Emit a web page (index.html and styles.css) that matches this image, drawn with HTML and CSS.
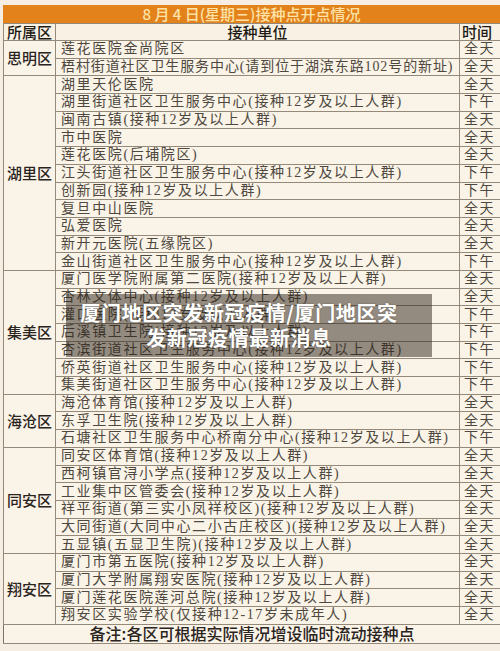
FILE: index.html
```html
<!DOCTYPE html>
<html lang="zh-CN">
<head>
<meta charset="utf-8">
<title>厦门地区突发新冠疫情</title>
<link rel="stylesheet" href="styles.css">
</head>
<body>
<div class="sheet">
  <div class="title">8 月 4 日(星期三)接种点开点情况</div>
  <table class="grid">
    <colgroup><col class="c-dist"><col class="c-unit"><col class="c-time"></colgroup>
    <tr class="head"><th>所属区</th><th>接种单位</th><th class="th-time">时间</th></tr>

    <tr class="row"><td class="dist" rowspan="2">思明区</td><td class="unit">莲花医院金尚院区</td><td class="time">全天</td></tr>
    <tr class="row"><td class="unit tight">梧村街道社区卫生服务中心(请到位于湖滨东路102号的新址)</td><td class="time">全天</td></tr>

    <tr class="row"><td class="dist" rowspan="11">湖里区</td><td class="unit">湖里天伦医院</td><td class="time">全天</td></tr>
    <tr class="row"><td class="unit">湖里街道社区卫生服务中心(接种12岁及以上人群)</td><td class="time">下午</td></tr>
    <tr class="row"><td class="unit">闽南古镇(接种12岁及以上人群)</td><td class="time">全天</td></tr>
    <tr class="row"><td class="unit">市中医院</td><td class="time">全天</td></tr>
    <tr class="row"><td class="unit">莲花医院(后埔院区)</td><td class="time">全天</td></tr>
    <tr class="row"><td class="unit">江头街道社区卫生服务中心(接种12岁及以上人群)</td><td class="time">下午</td></tr>
    <tr class="row"><td class="unit">创新园(接种12岁及以上人群)</td><td class="time">下午</td></tr>
    <tr class="row"><td class="unit">复旦中山医院</td><td class="time">全天</td></tr>
    <tr class="row"><td class="unit">弘爱医院</td><td class="time">全天</td></tr>
    <tr class="row"><td class="unit">新开元医院(五缘院区)</td><td class="time">全天</td></tr>
    <tr class="row"><td class="unit">金山街道社区卫生服务中心(接种12岁及以上人群)</td><td class="time">下午</td></tr>

    <tr class="row"><td class="dist" rowspan="7">集美区</td><td class="unit">厦门医学院附属第二医院(接种12岁及以上人群)</td><td class="time">全天</td></tr>
    <tr class="row"><td class="unit">杏林文体中心(接种12岁及以上人群)</td><td class="time">全天</td></tr>
    <tr class="row"><td class="unit">灌口医院(接种12岁及以上人群)</td><td class="time">下午</td></tr>
    <tr class="row"><td class="unit">后溪镇卫生院(接种12岁及以上人群)</td><td class="time">下午</td></tr>
    <tr class="row"><td class="unit">杏滨街道社区卫生服务中心(接种12岁及以上人群)</td><td class="time">下午</td></tr>
    <tr class="row"><td class="unit">侨英街道社区卫生服务中心(接种12岁及以上人群)</td><td class="time">下午</td></tr>
    <tr class="row"><td class="unit">集美街道社区卫生服务中心(接种12岁及以上人群)</td><td class="time">下午</td></tr>

    <tr class="row"><td class="dist" rowspan="3">海沧区</td><td class="unit">海沧体育馆(接种12岁及以上人群)</td><td class="time">全天</td></tr>
    <tr class="row"><td class="unit">东孚卫生院(接种12岁及以上人群)</td><td class="time">全天</td></tr>
    <tr class="row"><td class="unit">石塘社区卫生服务中心桥南分中心(接种12岁及以上人群)</td><td class="time">下午</td></tr>

    <tr class="row"><td class="dist" rowspan="6">同安区</td><td class="unit">同安区体育馆(接种12岁及以上人群)</td><td class="time">全天</td></tr>
    <tr class="row"><td class="unit">西柯镇官浔小学点(接种12岁及以上人群)</td><td class="time">全天</td></tr>
    <tr class="row"><td class="unit">工业集中区管委会(接种12岁及以上人群)</td><td class="time">全天</td></tr>
    <tr class="row"><td class="unit">祥平街道(第三实小凤祥校区)(接种12岁及以上人群)</td><td class="time">全天</td></tr>
    <tr class="row"><td class="unit">大同街道(大同中心二小古庄校区)(接种12岁及以上人群)</td><td class="time">全天</td></tr>
    <tr class="row"><td class="unit">五显镇(五显卫生院)(接种12岁及以上人群)</td><td class="time">全天</td></tr>

    <tr class="row"><td class="dist" rowspan="4">翔安区</td><td class="unit">厦门市第五医院(接种12岁及以上人群)</td><td class="time">全天</td></tr>
    <tr class="row"><td class="unit">厦门大学附属翔安医院(接种12岁及以上人群)</td><td class="time">全天</td></tr>
    <tr class="row"><td class="unit">厦门莲花医院莲河总院(接种12岁及以上人群)</td><td class="time">全天</td></tr>
    <tr class="row"><td class="unit">翔安区实验学校(仅接种12-17岁未成年人)</td><td class="time">全天</td></tr>

    <tr class="note"><td colspan="3">备注:各区可根据实际情况增设临时流动接种点</td></tr>
  </table>

  <div class="overlay">
    <span class="ov-line">厦门地区突发新冠疫情/厦门地区突</span>
    <span class="ov-line">发新冠疫情最新消息</span>
  </div>
</div>
</body>
</html>
```

FILE: styles.css
```css
html, body {
  margin: 0;
  padding: 0;
}
body {
  background: #f6eee2;
  width: 500px;
  height: 651px;
  overflow: hidden;
}
.sheet {
  position: relative;
  padding: 5px 0 0 3px;
}
.title {
  width: 497px;
  height: 18px;
  background: #e3821a;
  color: #fde3a7;
  font: 500 15px/18px "Noto Sans CJK SC", sans-serif;
  text-align: center;
}
.grid {
  border-collapse: collapse;
  table-layout: fixed;
  width: 497px;
  background: #faf3e7;
}
.c-dist { width: 52px; }
.c-unit { width: 404px; }
.c-time { width: 41px; }
.grid th, .grid td {
  border: 1px solid #958a7a;
  padding: 0;
  white-space: nowrap;
}
.head { height: 17px; }
.head th {
  font: 500 15px/14px "Noto Sans CJK SC", sans-serif;
  color: #1e1a16;
  text-align: center;
  background: #f9f2e4;
  overflow: visible;
}
.head .th-time {
  text-align: left;
  padding-left: 2px;
}
.row { height: 17.7px; }
.dist {
  font: 500 15px/16px "Noto Sans CJK SC", sans-serif;
  color: #2a241e;
  text-align: center;
  vertical-align: middle;
  border-left: 1.5px solid #7d7264;
}
.unit, .time {
  font-family: "Liberation Serif", "Noto Sans CJK SC", serif;
  font-size: 14px;
  line-height: 16px;
  letter-spacing: 1.6px;
  color: #4e4840;
  vertical-align: middle;
}
.unit {
  padding-left: 5px !important;
  overflow: hidden;
}
.unit.tight { letter-spacing: 0.9px; }
.time { padding-left: 4px !important; }
.note { height: 19px; }
.note td {
  font: 500 16px/17px "Noto Sans CJK SC", sans-serif;
  color: #2a241e;
  text-align: center;
  vertical-align: middle;
  border-left: 1.5px solid #7d7264;
}
.overlay {
  position: absolute;
  left: 66px;
  top: 294px;
  width: 366px;
  height: 63px;
  box-sizing: border-box;
  padding: 6px 30px 0 10px;
  background: rgba(45, 35, 25, 0.5);
  color: #ffffff;
  font: 700 20px/25px "Noto Sans CJK SC", sans-serif;
  letter-spacing: 0.6px;
  text-align: center;
  text-shadow: 0 0 2px rgba(0, 0, 0, 0.3);
}
.ov-line {
  display: block;
  white-space: nowrap;
}
```
